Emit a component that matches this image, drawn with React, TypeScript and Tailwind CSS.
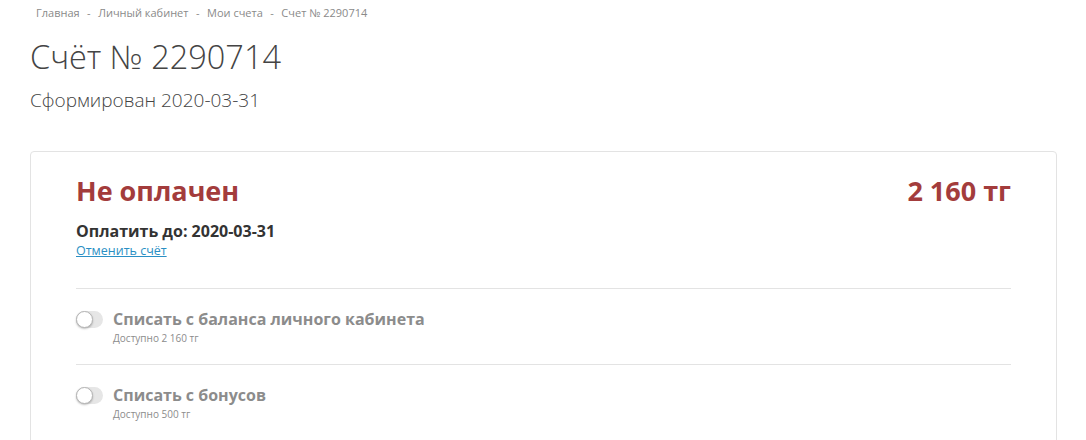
import React from "react";

function Toggle() {
  return (
    <span className="relative inline-block w-[27px] h-[17px] rounded-full bg-[#e6e6e6] shrink-0">
      <span className="absolute left-0 top-0 w-[17px] h-[17px] rounded-full bg-white border border-[#b5b5b5] shadow-[0_1px_2px_rgba(0,0,0,0.25)]" />
    </span>
  );
}

function PayOption({ title, sub }: { title: string; sub: string }) {
  return (
    <div className="pt-[20px] pb-[18px]">
      <div className="flex items-center gap-[10px]">
        <Toggle />
        <span className="text-[16px] font-bold text-[#8c8c8c] leading-[20px]">{title}</span>
      </div>
      <div className="mt-[1px] pl-[37px] text-[10px] text-[#8c8c8c] leading-[16px]">{sub}</div>
    </div>
  );
}

export default function App() {
  return (
    <div
      className="min-h-screen bg-white text-[#333] px-[30px]"
      style={{ fontFamily: '"Open Sans", sans-serif' }}
    >
      <div className="pt-[5px] flex items-center gap-[7.5px] text-[11px] text-[#8a8a8a] leading-[16px] pl-[6px]">
        <span>Главная</span>
        <span>-</span>
        <span>Личный кабинет</span>
        <span>-</span>
        <span>Мои счета</span>
        <span>-</span>
        <span>Счет № 2290714</span>
      </div>
      <h1 className="mt-[14px] text-[32.5px] font-light leading-[44px] text-[#444]">Счёт № 2290714</h1>
      <p className="mt-[8px] text-[19px] font-light leading-[26px] text-[#444]">Сформирован 2020-03-31</p>

      <div className="mt-[38px] border border-[#e3e3e3] rounded-[4px] px-[45px] pt-[20px] pb-[10px] mr-[-1px]">
        <div className="flex items-center justify-between">
          <span className="text-[27px] font-bold text-[#a33c3c] leading-[38px]">Не оплачен</span>
          <span className="text-[27px] font-bold text-[#a33c3c] leading-[38px]">2 160 тг</span>
        </div>
        <div className="mt-[11px] text-[16px] font-bold text-[#333] leading-[20px]">Оплатить до: 2020-03-31</div>
        <a href="#" className="block w-fit text-[12.5px] text-[#2a8fc4] underline leading-[20px]">Отменить счёт</a>
        <div className="mt-[27px] border-t border-[#e3e3e3]" />
        <PayOption title="Списать с баланса личного кабинета" sub="Доступно 2 160 тг" />
        <div className="border-t border-[#e3e3e3]" />
        <PayOption title="Списать с бонусов" sub="Доступно 500 тг" />
      </div>
    </div>
  );
}
